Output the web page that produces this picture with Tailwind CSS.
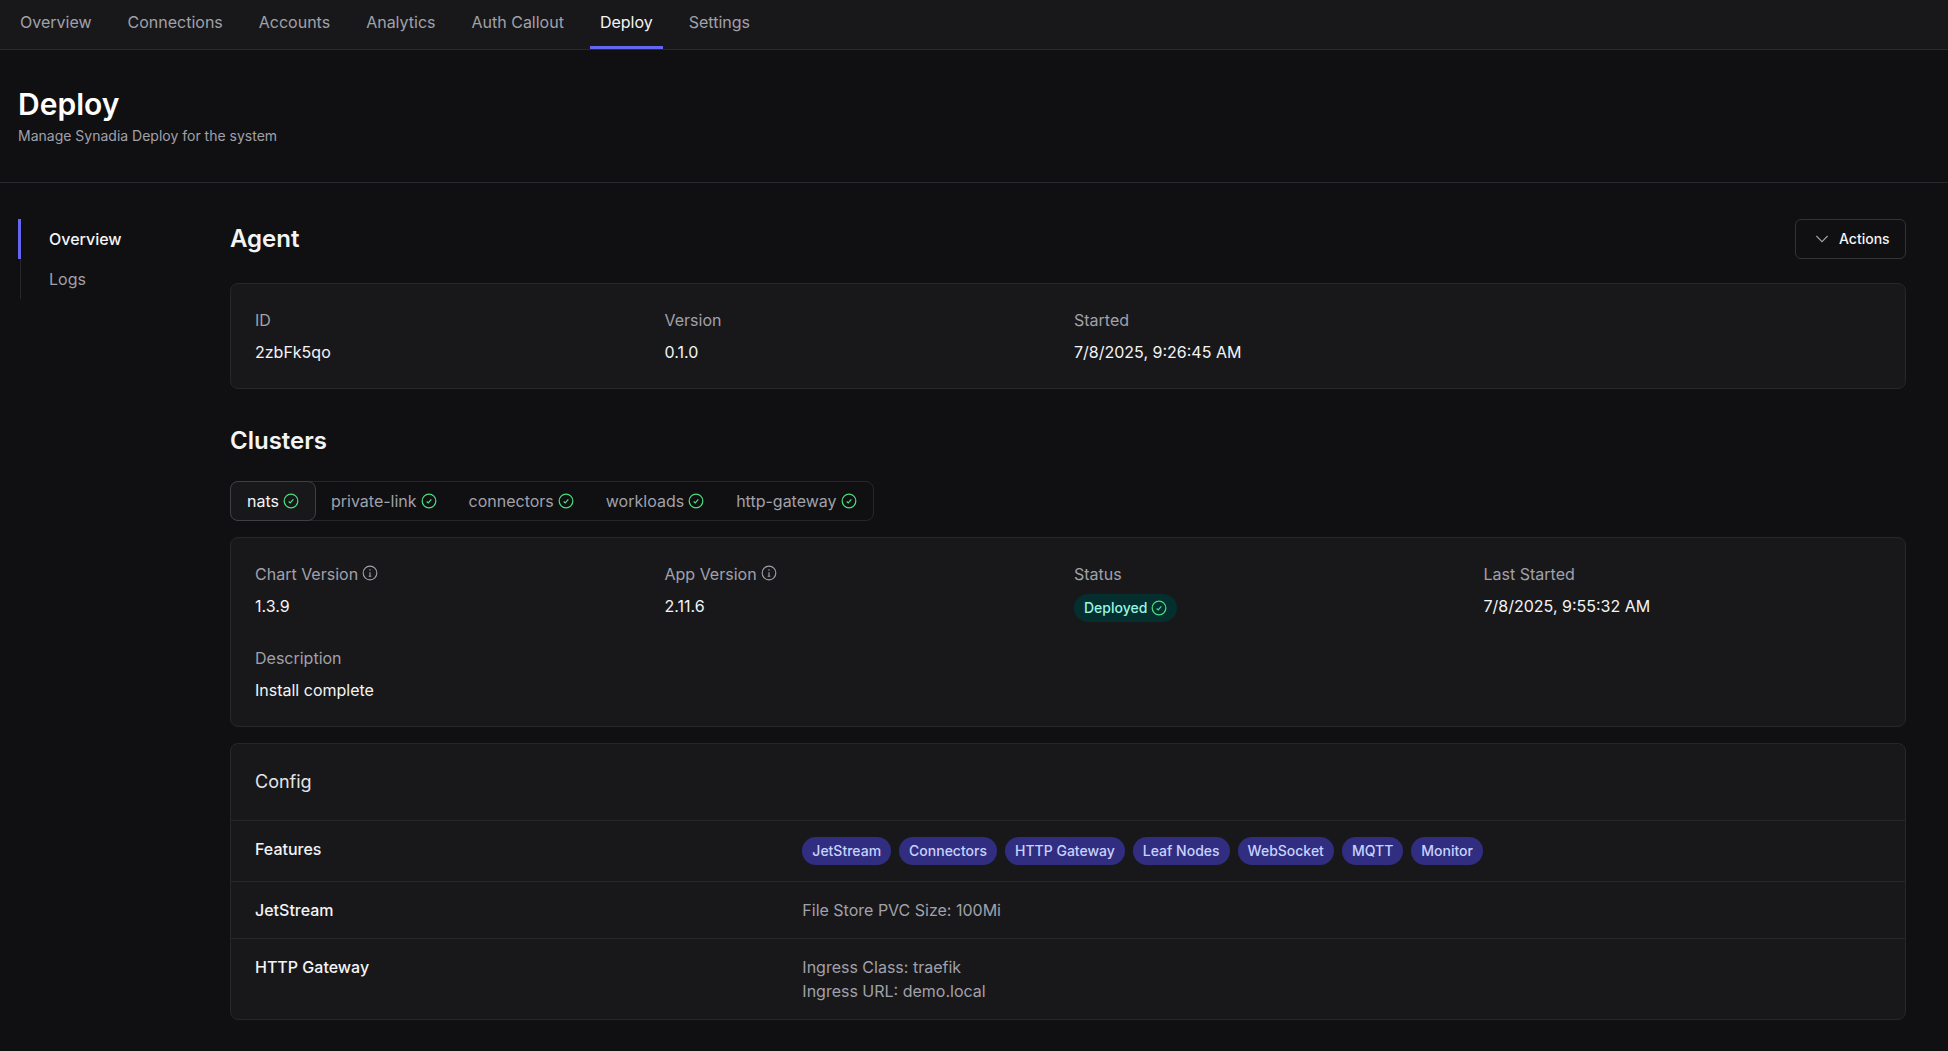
<!doctype html>
<html lang="en">
<head>
<meta charset="utf-8">
<title>Deploy</title>
<script src="https://cdn.jsdelivr.net/npm/@tailwindcss/browser@4"></script>
</head>
<body class="min-h-screen bg-[#101012] font-['Inter',sans-serif] text-[#e4e4e7] overflow-hidden">

<nav class="h-[50px] bg-[#18181b] border-b border-[#2a2a2e] flex px-[2px] text-base text-[#a1a1aa]">
    <a class="px-[18px] h-[49px] pb-[5px] flex items-center">Overview</a>
    <a class="px-[18px] h-[49px] pb-[5px] flex items-center">Connections</a>
    <a class="px-[18px] h-[49px] pb-[5px] flex items-center">Accounts</a>
    <a class="px-[18px] h-[49px] pb-[5px] flex items-center">Analytics</a>
    <a class="px-[18px] h-[49px] pb-[5px] flex items-center">Auth Callout</a>
    <a class="px-[10px] mx-[8px] h-[49px] pb-[2px] flex items-center text-[#f4f4f5] border-b-[3px] border-[#6366f1]">Deploy</a>
    <a class="px-[10px] mx-[8px] h-[49px] pb-[5px] flex items-center">Settings</a>
</nav>

<header class="h-[133px] border-b border-[#2a2a2e] px-[18px] pt-[35px]">
    <h1 class="text-3xl font-semibold text-white leading-[38px]">Deploy</h1>
    <p class="text-sm text-[#a1a1aa] leading-[20px] mt-[3px]">Manage Synadia Deploy for the system</p>
</header>

<div class="flex pt-[36px] pl-[18px] pr-[42px]">
    <aside class="w-[212px] shrink-0">
        <ul class="ml-[2px] border-l border-[#27272a]">
            <li class="h-10 -ml-[3px] border-l-[3px] border-[#6366f1] pl-[28px] flex items-center text-base font-medium text-[#f4f4f5]">Overview</li>
            <li class="h-10 pl-[28px] flex items-center text-base text-[#a1a1aa]">Logs</li>
        </ul>
    </aside>

    <main class="flex-1 min-w-0">
        <div class="flex items-center justify-between h-10 mb-[24px]">
            <h2 class="text-2xl font-semibold text-[#f4f4f5]">Agent</h2>
            <button class="h-10 w-[111px] border border-[#333336] rounded-md flex items-center pl-[20px] gap-[11px] text-sm font-medium text-[#f4f4f5]">
                <svg class="w-3 h-3 text-[#a1a1aa]" viewBox="0 0 12 12" fill="none" stroke="currentColor" stroke-width="1.1"><path d="M.4 3 6 8.6 11.6 3"/></svg>
                Actions
            </button>
        </div>

        <section class="bg-[#18181b] border border-[#27272a] rounded-lg p-6 grid grid-cols-4 gap-x-3">
            <div>
                <div class="h-6 leading-6 text-[#a1a1aa]">ID</div>
                <div class="h-6 leading-6 mt-2 text-[#f4f4f5]">2zbFk5qo</div>
            </div>
            <div>
                <div class="h-6 leading-6 text-[#a1a1aa]">Version</div>
                <div class="h-6 leading-6 mt-2 text-[#f4f4f5]">0.1.0</div>
            </div>
            <div>
                <div class="h-6 leading-6 text-[#a1a1aa]">Started</div>
                <div class="h-6 leading-6 mt-2 text-[#f4f4f5]">7/8/2025, 9:26:45 AM</div>
            </div>
        </section>

        <h2 class="text-2xl font-semibold text-[#f4f4f5] leading-8 mt-[36px]">Clusters</h2>

        <div class="inline-flex h-10 mt-[24px] border border-[#27272a] rounded-lg text-base text-[#a1a1aa] align-top">
            <div class="-m-px h-10 px-4 flex items-center gap-1 bg-[#18181b] border border-[#3f3f46] rounded-lg text-[#f4f4f5]">
                nats
                <svg class="w-4 h-4 text-[#4ade80]" viewBox="0 0 15 15" fill="none" stroke="currentColor" stroke-width="1.15"><circle cx="7.5" cy="7.5" r="6.4"/><path d="M5.3 7.9 6.8 9.3 9.7 5.9"/></svg>
            </div>
            <div class="px-4 flex items-center gap-1">
                private-link
                <svg class="w-4 h-4 text-[#4ade80]" viewBox="0 0 15 15" fill="none" stroke="currentColor" stroke-width="1.15"><circle cx="7.5" cy="7.5" r="6.4"/><path d="M5.3 7.9 6.8 9.3 9.7 5.9"/></svg>
            </div>
            <div class="px-4 flex items-center gap-1">
                connectors
                <svg class="w-4 h-4 text-[#4ade80]" viewBox="0 0 15 15" fill="none" stroke="currentColor" stroke-width="1.15"><circle cx="7.5" cy="7.5" r="6.4"/><path d="M5.3 7.9 6.8 9.3 9.7 5.9"/></svg>
            </div>
            <div class="px-4 flex items-center gap-1">
                workloads
                <svg class="w-4 h-4 text-[#4ade80]" viewBox="0 0 15 15" fill="none" stroke="currentColor" stroke-width="1.15"><circle cx="7.5" cy="7.5" r="6.4"/><path d="M5.3 7.9 6.8 9.3 9.7 5.9"/></svg>
            </div>
            <div class="px-4 flex items-center gap-1">
                http-gateway
                <svg class="w-4 h-4 text-[#4ade80]" viewBox="0 0 15 15" fill="none" stroke="currentColor" stroke-width="1.15"><circle cx="7.5" cy="7.5" r="6.4"/><path d="M5.3 7.9 6.8 9.3 9.7 5.9"/></svg>
            </div>
        </div>

        <section class="bg-[#18181b] border border-[#27272a] rounded-lg p-6 grid grid-cols-4 gap-x-3 gap-y-7 mt-4">
            <div>
                <div class="h-6 flex items-center gap-1 text-[#a1a1aa]">
                    Chart Version
                    <svg class="w-4 h-4 -mt-[2px]" viewBox="0 0 15 15" fill="none" stroke="currentColor" stroke-width="1.05"><circle cx="7.5" cy="7.5" r="6.4"/><path d="M7.5 6.8V10.6M6.3 10.6H8.7"/><circle cx="7.5" cy="4.6" r=".7" fill="currentColor" stroke="none"/></svg>
                </div>
                <div class="h-6 leading-6 mt-2 text-[#f4f4f5]">1.3.9</div>
            </div>
            <div>
                <div class="h-6 flex items-center gap-1 text-[#a1a1aa]">
                    App Version
                    <svg class="w-4 h-4 -mt-[2px]" viewBox="0 0 15 15" fill="none" stroke="currentColor" stroke-width="1.05"><circle cx="7.5" cy="7.5" r="6.4"/><path d="M7.5 6.8V10.6M6.3 10.6H8.7"/><circle cx="7.5" cy="4.6" r=".7" fill="currentColor" stroke="none"/></svg>
                </div>
                <div class="h-6 leading-6 mt-2 text-[#f4f4f5]">2.11.6</div>
            </div>
            <div>
                <div class="h-6 leading-6 text-[#a1a1aa]">Status</div>
                <div class="h-6 mt-2 flex items-center">
                    <span class="h-7 mt-[4px] px-[10px] inline-flex items-center gap-1 rounded-full bg-[#042f2e] text-sm font-medium text-[#99f6e4]">
                        Deployed
                        <svg class="w-4 h-4 text-[#4ade80]" viewBox="0 0 15 15" fill="none" stroke="currentColor" stroke-width="1.15"><circle cx="7.5" cy="7.5" r="6.4"/><path d="M5.3 7.9 6.8 9.3 9.7 5.9"/></svg>
                    </span>
                </div>
            </div>
            <div>
                <div class="h-6 leading-6 text-[#a1a1aa]">Last Started</div>
                <div class="h-6 leading-6 mt-2 text-[#f4f4f5]">7/8/2025, 9:55:32 AM</div>
            </div>
            <div>
                <div class="h-6 leading-6 text-[#a1a1aa]">Description</div>
                <div class="h-6 leading-6 mt-2 text-[#f4f4f5]">Install complete</div>
            </div>
        </section>

        <section class="bg-[#18181b] border border-[#27272a] rounded-lg mt-4">
            <h3 class="px-6 py-6 text-lg leading-7 font-normal text-[#e4e4e7]">Config</h3>
            <div class="border-t border-[#27272a] px-6 py-4 grid grid-cols-3 gap-4">
                <div class="font-medium text-[#f4f4f5] h-6 leading-6">Features</div>
                <div class="col-span-2 flex gap-2 text-sm font-medium text-[#c7d2fe]">
                    <span class="h-7 px-[10px] flex items-center rounded-full bg-[#312e81]">JetStream</span>
                    <span class="h-7 px-[10px] flex items-center rounded-full bg-[#312e81]">Connectors</span>
                    <span class="h-7 px-[10px] flex items-center rounded-full bg-[#312e81]">HTTP Gateway</span>
                    <span class="h-7 px-[10px] flex items-center rounded-full bg-[#312e81]">Leaf Nodes</span>
                    <span class="h-7 px-[10px] flex items-center rounded-full bg-[#312e81]">WebSocket</span>
                    <span class="h-7 px-[10px] flex items-center rounded-full bg-[#312e81]">MQTT</span>
                    <span class="h-7 px-[10px] flex items-center rounded-full bg-[#312e81]">Monitor</span>
                </div>
            </div>
            <div class="border-t border-[#27272a] px-6 py-4 grid grid-cols-3 gap-4">
                <div class="font-medium text-[#f4f4f5] leading-6">JetStream</div>
                <div class="col-span-2 text-[#a1a1aa] leading-6">File Store PVC Size: 100Mi</div>
            </div>
            <div class="border-t border-[#27272a] px-6 py-4 grid grid-cols-3 gap-4">
                <div class="font-medium text-[#f4f4f5] leading-6">HTTP Gateway</div>
                <div class="col-span-2 text-[#a1a1aa] leading-6">
                    <div>Ingress Class: traefik</div>
                    <div>Ingress URL: demo.local</div>
                </div>
            </div>
        </section>
    </main>
</div>

</body>
</html>
